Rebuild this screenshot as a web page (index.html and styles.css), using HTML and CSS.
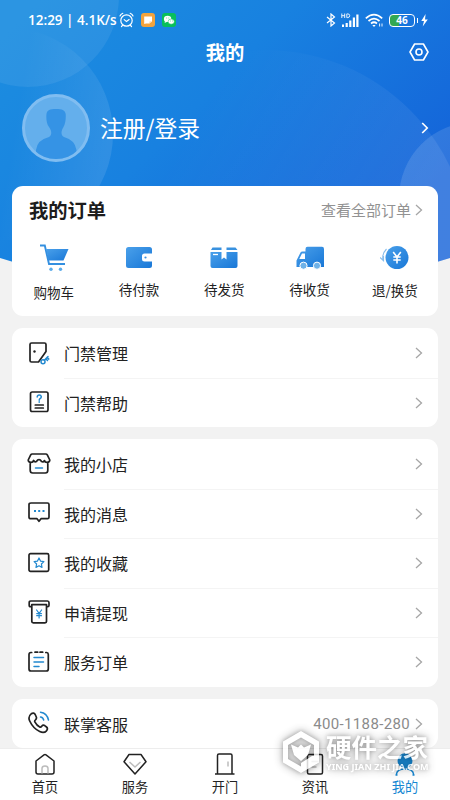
FILE: index.html
```html
<!DOCTYPE html>
<html lang="zh-CN">
<head>
<meta charset="utf-8">
<title>我的</title>
<link rel="stylesheet" href="styles.css">
</head>
<body>
<div class="screen">
  <svg class="backdrop" width="450" height="272" viewBox="0 0 450 272">
    <defs>
      <linearGradient id="sky" gradientUnits="userSpaceOnUse" x1="40" y1="0" x2="330" y2="290">
        <stop offset="0" stop-color="#1c8de0"/><stop offset=".45" stop-color="#1881e0"/><stop offset="1" stop-color="#1463d9"/>
      </linearGradient>
      <linearGradient id="fade" gradientUnits="userSpaceOnUse" x1="230" y1="60" x2="430" y2="180">
        <stop offset="0" stop-color="#fff" stop-opacity="0"/><stop offset="1" stop-color="#fff" stop-opacity=".08"/>
      </linearGradient>
      <linearGradient id="glow" gradientUnits="userSpaceOnUse" x1="20" y1="90" x2="114" y2="105">
        <stop offset="0" stop-color="#fff" stop-opacity="0"/><stop offset="1" stop-color="#fff" stop-opacity=".1"/>
      </linearGradient>
      <clipPath id="bowl"><path d="M0 0H450V258Q225 330 0 258Z"/></clipPath>
    </defs>
    <g clip-path="url(#bowl)">
      <rect width="450" height="272" fill="url(#sky)"/>
      <circle cx="28" cy="-4" r="91" fill="#fff" fill-opacity=".07"/>
      <circle cx="7" cy="134" r="106" fill="url(#glow)"/>
      <circle cx="265" cy="255" r="205" fill="url(#fade)"/>
      <circle cx="475" cy="198" r="76" fill="#fff" fill-opacity=".12"/>
    </g>
  </svg>

  <header class="statusbar">
    <span class="clock">12:29 | 4.1K/s</span>
    <svg class="alarm" width="15" height="16" viewBox="0 0 15 16" fill="none" stroke="#fff" stroke-width="1.2" stroke-linecap="round"><circle cx="7.5" cy="8.5" r="5.7"/><path d="M5.200 7.600l2.300 2 2.600-2M1 4Q1.700 2 3.800 1.300M14 4Q13.300 2 11.200 1.300M3.500 13.300l-1 1.200M11.500 13.300l1 1.200"/></svg>
    <svg class="app" width="14" height="14" viewBox="0 0 14 14"><rect width="14" height="14" rx="3" fill="#f2a33d"/><path d="M3.200 3.500H11V8.500L8.500 10.600H5L3.200 11Z" fill="#fff"/><path d="M8.500 10.600V8.500H11Z" fill="#f9cf93"/></svg>
    <svg class="app" width="14" height="14" viewBox="0 0 14 14"><rect width="14" height="14" rx="3" fill="#08bf5b"/><ellipse cx="5.600" cy="5.900" rx="3.700" ry="3.200" fill="#fff"/><path d="M3 8l-.4 2 2-1Z" fill="#fff"/><ellipse cx="9.200" cy="8.600" rx="3.100" ry="2.600" fill="#fff" stroke="#08bf5b" stroke-width=".5"/><path d="M4.400 5h.7M6.500 5h.7M8 8h.6M10 8h.6" stroke="#08bf5b" stroke-width=".8"/></svg>
    <span class="grow"></span>
    <svg class="bt" width="10" height="14" viewBox="0 0 10 14" fill="none" stroke="#fff" stroke-width="1.200"><path d="M1 4l7.500 6L5 13V1l3.500 3L1 10"/></svg>
    <svg class="signal" width="18" height="15" viewBox="0 0 18 15"><g fill="none" stroke="#fff" stroke-width=".9"><path d="M.8 .5v4.500M3.700 .5v4.500M.8 2.700h2.900M5.800 .9v3.700h1Q8.700 4.500 8.700 2.700T6.800 .9Z"/></g><path d="M1 14v-2.500h2V14ZM4.600 14v-4h2.200v4ZM8.200 14V7.500h2.200V14ZM11.800 14V4.500H14V14ZM15.300 14V1.500h2.200V14Z" fill="#fff"/></svg>
    <svg class="wifi" width="19" height="15" viewBox="0 0 19 15" fill="none" stroke="#fff" stroke-width="1.700"><path d="M.8 5.300Q9 -2 17.200 5.300M3.500 8Q9 3.300 14.500 8M6 10.500Q9 8 12 10.500"/><path d="M7.300 12L9 14l1.700-2Z" fill="#fff" stroke="none"/><path d="M14.600 10.500v3M17 10.500v3" stroke-width=".9"/></svg>
    <span class="battery"><span class="level">46</span></span>
    <svg class="bolt" width="7" height="13" viewBox="0 0 7 13"><path d="M4.600 0L.3 7H3L1.700 12.500 6.800 5.500H4Z" fill="#fff"/></svg>
  </header>

  <div class="titlebar">
    <h1>我的</h1>
    <svg class="gear" width="20" height="18" viewBox="0 0 20 18" fill="none" stroke="#fff" stroke-width="1.600" stroke-linejoin="round"><path d="M5.600 1h8.800L19 9l-4.600 8H5.600L1 9Z"/><circle cx="10" cy="9" r="3"/></svg>
  </div>

  <div class="profile">
    <svg width="70" height="70" viewBox="0 0 70 70"><defs><clipPath id="face"><circle cx="35" cy="35" r="31"/></clipPath></defs><circle cx="35" cy="35" r="32.500" fill="#64afec" stroke="#80bdf1" stroke-width="3"/><path clip-path="url(#face)" d="M25.500 21C26 17 29 16 35 16S44 17 44.700 21C45 25 44.500 31 42.500 34C40 38 39.500 42 43 44Q54 47 55.500 57V70H15V57Q16 47 28 44C31 42 31 38 28 34C25.500 31 25 25 25.500 21Z" fill="#3593e5"/></svg>
    <span class="login">注册/登录</span>
    <svg width="8" height="12" viewBox="0 0 8 12" fill="none" stroke="#fff" stroke-width="1.700"><path d="M1.200 1l5 5-5 5"/></svg>
  </div>

  <main class="cards">
    <section class="card orders">
      <div class="orders-head">
        <h2>我的订单</h2>
        <span class="all">查看全部订单</span>
        <svg class="chev" width="8" height="12" viewBox="0 0 8 12"><path d="M1 1l5.500 5L1 11"/></svg>
      </div>
      <svg class="defs" width="0" height="0"><defs><linearGradient id="blue" x1="0" y1="0" x2="1" y2="1"><stop offset="0" stop-color="#4aa0ea"/><stop offset="1" stop-color="#1877d7"/></linearGradient></defs></svg>
      <div class="order-grid">
        <div class="order cart"><svg width="30" height="28" viewBox="0 0 30 28"><path d="M1 1.500H5.800L10 20H26" fill="none" stroke="#338fe0" stroke-width="1.900"/><path d="M7 5H29.500L24.500 16.500H9.600Z" fill="url(#blue)"/><circle cx="12" cy="25.300" r="1.700" fill="#5babe9"/><circle cx="21.500" cy="25.300" r="1.700" fill="#5babe9"/></svg><span>购物车</span></div>
        <div class="order"><svg width="30" height="28" viewBox="0 0 30 28"><path d="M4.500 3H25.500Q28 3 28 5.500V9.500H20.500Q18 9.500 18 12V15Q18 17.500 20.500 17.500H28V21.500Q28 24 25.500 24H4.500Q2 24 2 21.500V5.500Q2 3 4.500 3Z" fill="url(#blue)"/><path d="M20.500 10.700H28V16.300H20.500Q19.300 16.300 19.300 15V12Q19.300 10.700 20.500 10.700Z" fill="#fff"/><circle cx="21.500" cy="13.500" r="1.100" fill="#388fe1"/></svg><span>待付款</span></div>
        <div class="order"><svg width="30" height="28" viewBox="0 0 30 28"><path d="M3.500 3.500H12.500V6H2ZM17.500 3.500H26.500L28.500 6H17.500Z" fill="#3991df"/><path d="M1.500 8H12.500V15.500L15 13.500 17.500 15.500V8H28.500V22Q28.500 24 26.500 24H3.500Q1.500 24 1.500 22Z" fill="url(#blue)"/><path d="M4 10.500h5" stroke="#fff" stroke-width="1.300"/></svg><span>待发货</span></div>
        <div class="order"><svg width="30" height="28" viewBox="0 0 30 28"><path d="M12.500 2.800H27Q29 2.800 29 5V23H1.500V16.500L5.500 8.500Q6 7.500 7.500 7.500H10.500V5Q10.500 2.800 12.500 2.800Z" fill="url(#blue)"/><path d="M7 9.500H10V15H4.300Z" fill="#fff"/><circle cx="8.500" cy="21.700" r="3.600" fill="#6fb2e8" stroke="#fff" stroke-width="1"/><circle cx="22" cy="21.700" r="3.600" fill="#6fb2e8" stroke="#fff" stroke-width="1"/></svg><span>待收货</span></div>
        <div class="order refund"><svg width="30" height="28" viewBox="0 0 30 28"><circle cx="17" cy="13.500" r="11.500" fill="url(#blue)"/><path d="M13.200 8l3.800 5 3.800-5M17 12.500V19.500M13.300 13h7.400M13.300 16h7.400" fill="none" stroke="#fff" stroke-width="1.600"/><path d="M6.500 5Q1.500 10 3.200 16.500M0 13.500l3.500 3.200V12" fill="none" stroke="#87bdec" stroke-width="1.100"/></svg><span>退/换货</span></div>
      </div>
    </section>

    <section class="card list">
      <div class="row"><svg class="ic" width="24" height="24" viewBox="0 0 24 24"><path d="M19 10.500V3.500Q19 2 17.500 2H4.500Q3 2 3 3.500V19.500Q3 21 4.500 21H11.500Z"/><circle cx="7.500" cy="10.500" r="1.200" class="dot"/><g class="b"><circle cx="16" cy="20.700" r="2"/><path d="M17.300 19.200L21 15.500M18.800 17.800l1.700 1.700M20 16.400l1.800 1.700"/></g></svg><div class="cell"><span>门禁管理</span><svg class="chev" width="8" height="12" viewBox="0 0 8 12"><path d="M1 1l5.500 5L1 11"/></svg></div></div>
      <div class="row"><svg class="ic" width="24" height="24" viewBox="0 0 24 24"><rect x="3.500" y="2" width="17.500" height="19.500" rx="1.700"/><path d="M8.300 15h8M8.300 18h8"/><path class="b" d="M10.200 7Q10.400 4.900 12.200 4.900T14.300 6.700Q14.300 7.900 13 8.700Q12.200 9.300 12.200 10.300M12.200 11.700v.5"/></svg><div class="cell"><span>门禁帮助</span><svg class="chev" width="8" height="12" viewBox="0 0 8 12"><path d="M1 1l5.500 5L1 11"/></svg></div></div>
    </section>

    <section class="card list">
      <div class="row"><svg class="ic" width="24" height="24" viewBox="0 0 24 24"><path d="M5.200 2H18.800Q19.800 2 20.300 2.900L22.800 8Q22.800 10.200 20.200 10.400Q18 10.500 17.500 8.500Q16.500 10.500 14.500 9.500Q13.500 7.700 12 7.700T9.500 9.500Q7.500 10.500 6.500 8.500Q6 10.500 3.800 10.400Q1.200 10.200 1.200 8L3.700 2.900Q4.200 2 5.200 2ZM3.200 10.700V18.300Q3.200 21 5.700 21H18.300Q20.800 21 20.800 18.300V10.700"/><path class="b" d="M8.500 16h7"/></svg><div class="cell"><span>我的小店</span><svg class="chev" width="8" height="12" viewBox="0 0 8 12"><path d="M1 1l5.500 5L1 11"/></svg></div></div>
      <div class="row"><svg class="ic" width="24" height="24" viewBox="0 0 24 24"><path d="M4 2H20.500Q22 2 22 3.500V16.200Q22 17.700 20.500 17.700H14L12 20.300 10 17.700H4Q2 17.700 2 16.200V3.500Q2 2 4 2Z"/><path class="b dots" d="M7 10h2M11.200 10h2M15.500 10h2"/></svg><div class="cell"><span>我的消息</span><svg class="chev" width="8" height="12" viewBox="0 0 8 12"><path d="M1 1l5.500 5L1 11"/></svg></div></div>
      <div class="row"><svg class="ic" width="24" height="24" viewBox="0 0 24 24"><rect x="2" y="2.700" width="19.700" height="17.600" rx="1.500"/><path class="b star" d="M12 7l1.500 3.100 3.400.5-2.500 2.400.6 3.400-3-1.600-3 1.600.6-3.400L7.100 10.600l3.400-.5Z"/></svg><div class="cell"><span>我的收藏</span><svg class="chev" width="8" height="12" viewBox="0 0 8 12"><path d="M1 1l5.500 5L1 11"/></svg></div></div>
      <div class="row"><svg class="ic" width="24" height="24" viewBox="0 0 24 24"><path d="M4.500 6.700H3.500Q2.200 6.700 2.200 5.200V2.700Q2.200 1 3.700 1H20.500Q22 1 22 2.700V5.200Q22 6.700 20.700 6.700H19.500M4.800 4.600H19.500V21.500Q19.500 22.800 18 22.800H6.300Q4.800 22.800 4.800 21.500Z"/><path class="b yen" d="M9.600 10l2.500 3.300 2.500-3.300M12.100 13.300V18M9.700 13.600h4.800M9.700 15.700h4.800"/></svg><div class="cell"><span>申请提现</span><svg class="chev" width="8" height="12" viewBox="0 0 8 12"><path d="M1 1l5.500 5L1 11"/></svg></div></div>
      <div class="row"><svg class="ic" width="24" height="24" viewBox="0 0 24 24"><path d="M4.700 2.500H4Q2 2.700 2 4.500V19Q2 21 4 21H19.300Q21.300 21 21.300 19V4.500Q21.300 2.700 19.500 2.500H18.800M8 2.200h2.700M13 2.200h2.700"/><path class="b" d="M7 7.500h9.500M7 12h9.500M7 16.500h5"/></svg><div class="cell"><span>服务订单</span><svg class="chev" width="8" height="12" viewBox="0 0 8 12"><path d="M1 1l5.500 5L1 11"/></svg></div></div>
    </section>

    <section class="card list">
      <div class="row"><svg class="ic" width="24" height="24" viewBox="0 0 24 24"><path d="M4.200 2.800Q6.700 1 8.200 3.500L9.300 6Q9.900 7.500 8.500 8.800Q7.200 9.800 8 11.200Q9.700 14.500 12.700 16Q13.900 16.500 14.700 15.300Q16 13.600 17.700 14.600L19.500 16Q21.300 17.500 19.500 19.800Q17 22.500 12.700 20.500Q6.200 17.500 2.700 10Q.7 5.500 4.200 2.800Z"/><path class="b" d="M13.500 1.200Q20 2 21.500 9M13.500 6Q16 6.300 16.700 9"/></svg><div class="cell"><span>联掌客服</span><span class="phone">400-1188-280</span><svg class="chev" width="8" height="12" viewBox="0 0 8 12"><path d="M1 1l5.500 5L1 11"/></svg></div></div>
    </section>
  </main>

  <nav class="tabs">
    <div class="tab"><svg width="24" height="24" viewBox="0 0 24 24"><path d="M3 8L11 1.800Q12 1.100 13 1.800L21 8V19Q21 21 19 21H5Q3 21 3 19Z"/><path class="g" d="M9 20.500V15.500Q9 13 12 13T15 15.500V20.500"/></svg><span>首页</span></div>
    <div class="tab"><svg width="24" height="24" viewBox="0 0 24 24"><path d="M6 1.500H18L23 8.700 12 21 1 8.700Z"/><path class="g" d="M6.500 9l5.500 5 5.500-5"/></svg><span>服务</span></div>
    <div class="tab"><svg width="24" height="24" viewBox="0 0 24 24"><path d="M4.500 21V2.500Q4.500 1 6 1H17.500Q19 1 19 2.500V21M2 21H21.500"/><path class="g" d="M15 8.500v5"/></svg><span>开门</span></div>
    <div class="tab"><svg width="24" height="24" viewBox="0 0 24 24"><rect x="4.500" y="1.500" width="15" height="19.500" rx="1.500"/><path class="g" d="M8.500 8.500h7M8.500 14h5"/></svg><span>资讯</span></div>
    <div class="tab active"><svg width="24" height="24" viewBox="0 0 24 24"><circle cx="12" cy="7.700" r="6.700" fill="#1687d2"/><path d="M3.500 22V21Q4 16 12 16T20.500 21V22M2.500 22H4.500M19.500 22h2"/></svg><span>我的</span></div>
  </nav>

  <div class="watermark">
    <svg width="40" height="44" viewBox="0 0 40 44"><path fill="#fff" fill-rule="evenodd" d="M20 1L38 11.500V32.500L20 43 2 32.500V11.500ZM20 7.500L7 15V29L20 36.500 33 29V15Z"/><path fill="#fff" d="M10 14.500L17 17.500 20 14.500 23 17.500 30 14.500 27 25 20 31 13 25ZM20 33L31 26 38 25.500V32L20 42Z"/></svg>
    <div class="mark"><strong>硬件之家</strong><span>YING JIAN ZHI JIA.COM</span></div>
  </div>
</div>
</body>
</html>
```
FILE: styles.css
```css
* { box-sizing: border-box; }
body { margin: 0; }
svg { display: block; flex: none; }
h1, h2 { margin: 0; }
.screen {
  position: relative;
  width: 450px;
  height: 800px;
  overflow: hidden;
  background: #f2f2f2;
  color: #222;
  display: flex;
  flex-direction: column;
  font-family: "Noto Sans CJK SC", sans-serif;
}
.backdrop { position: absolute; top: 0; left: 0; }

.statusbar {
  position: relative;
  height: 36px;
  flex: none;
  padding: 4px 22px 0 28px;
  display: flex;
  align-items: center;
  color: #fff;
}
.clock {
  font: 600 13.5px/20px "Open Sans", "Noto Sans", sans-serif;
  width: 91px;
  white-space: nowrap;
}
.app { margin-left: 7px; }
.grow { flex: 1; }
.signal { margin-left: 5px; }
.wifi { margin-left: 6px; }
.battery {
  position: relative;
  margin-left: 5px;
  width: 26px;
  height: 13px;
  border: 1.5px solid #fff;
  border-radius: 4px;
  background: linear-gradient(90deg, #32a852 9px, transparent 9px);
}
.battery::after {
  content: "";
  position: absolute;
  right: -4px;
  top: 3px;
  width: 1.5px;
  height: 5px;
  background: #fff;
}
.level {
  display: block;
  text-align: center;
  font: 700 10px/11px "Open Sans", sans-serif;
}
.bolt { margin-left: 6px; }

.titlebar {
  position: relative;
  flex: none;
  height: 32px;
  display: grid;
  grid-template-columns: 1fr auto 1fr;
  align-items: center;
  padding: 0 21px;
}
.titlebar h1 {
  grid-column: 2;
  font-size: 19.3px;
  line-height: 32px;
  font-weight: 700;
  color: #fff;
}
.gear { justify-self: end; }

.profile {
  position: relative;
  flex: none;
  height: 118px;
  padding: 2px 21px 0;
  display: flex;
  align-items: center;
}
.login {
  flex: 1;
  margin-left: 9px;
  font-size: 22.8px;
  line-height: 34px;
  color: #fff;
}

.cards {
  position: relative;
  flex: 1;
  min-height: 0;
  overflow: hidden;
  padding: 0 12px;
  display: flex;
  flex-direction: column;
  gap: 12px;
}
.card {
  flex: none;
  background: #fff;
  border-radius: 11px;
}
.chev {
  fill: none;
  stroke: #a6a6a6;
  stroke-width: 1.3;
}
.orders { height: 130px; }
.orders-head {
  display: flex;
  align-items: center;
  height: 48px;
  padding: 0 15px 0 17px;
}
.orders-head h2 {
  flex: 1;
  font-size: 19.3px;
  line-height: 28px;
  font-weight: 700;
  color: #1c1c1c;
}
.all {
  font-size: 15px;
  line-height: 22px;
  color: #929292;
  margin-right: 4px;
}
.defs { position: absolute; }
.order-grid {
  display: grid;
  grid-template-columns: repeat(5, 85.3px);
  margin-left: -1px;
}
.order {
  display: flex;
  flex-direction: column;
  align-items: center;
  padding-top: 10px;
  font-size: 13.5px;
  line-height: 20px;
  white-space: nowrap;
}
.order span { margin-top: 6.5px; }
.order.cart span { margin-top: 9.5px; }
.order.refund span { margin-top: 8px; }

.list .row {
  display: flex;
  align-items: center;
  height: 49.5px;
  padding-left: 15px;
}
.ic {
  fill: none;
  stroke: #222;
  stroke-width: 1.7;
  stroke-linejoin: round;
  stroke-linecap: round;
}
.ic .b { stroke: #2389cf; stroke-width: 1.5; }
.ic .star, .ic .yen { stroke-width: 1.2; }
.ic .dots { stroke-width: 2; stroke-linecap: butt; }
.ic .dot { fill: #222; stroke: none; }
.cell {
  flex: 1;
  height: 100%;
  margin-left: 13px;
  padding: 1px 15px 0 0;
  display: flex;
  align-items: center;
  justify-content: space-between;
  box-shadow: 0 1px 0 #f4f4f4;
  font-size: 16px;
  line-height: 24px;
}
.row:last-child .cell { box-shadow: none; }
.phone {
  margin-left: auto;
  margin-right: 5px;
  font: 400 15px/24px Roboto, sans-serif;
  letter-spacing: .35px;
  color: #8b8b8b;
}

.tabs {
  position: relative;
  flex: none;
  height: 52px;
  background: #fff;
  border-top: 1px solid #ededed;
  display: grid;
  grid-template-columns: repeat(5, 1fr);
}
.tab {
  display: flex;
  flex-direction: column;
  align-items: center;
  padding-top: 4px;
  font-size: 13.2px;
  line-height: 18px;
}
.tab span { margin-top: 1px; }
.tab svg {
  fill: none;
  stroke: #222;
  stroke-width: 1.5;
  stroke-linejoin: round;
}
.tab .g { stroke: #bcbcbc; }
.tab.active { color: #1687d2; }
.tab.active svg { stroke: #1687d2; }

.watermark {
  position: absolute;
  left: 281px;
  top: 730px;
  display: flex;
  opacity: .82;
  color: #fff;
  filter: drop-shadow(0 0 2px rgba(0, 0, 0, .3)) drop-shadow(0 0 5px rgba(0, 0, 0, .4));
}
.mark {
  margin-left: 5px;
  display: flex;
  flex-direction: column;
  white-space: nowrap;
}
.mark strong { font-size: 25.5px; line-height: 32px; }
.mark span {
  margin-top: -1px;
  font: 700 9.1px/12px "Noto Sans", sans-serif;
}
```
